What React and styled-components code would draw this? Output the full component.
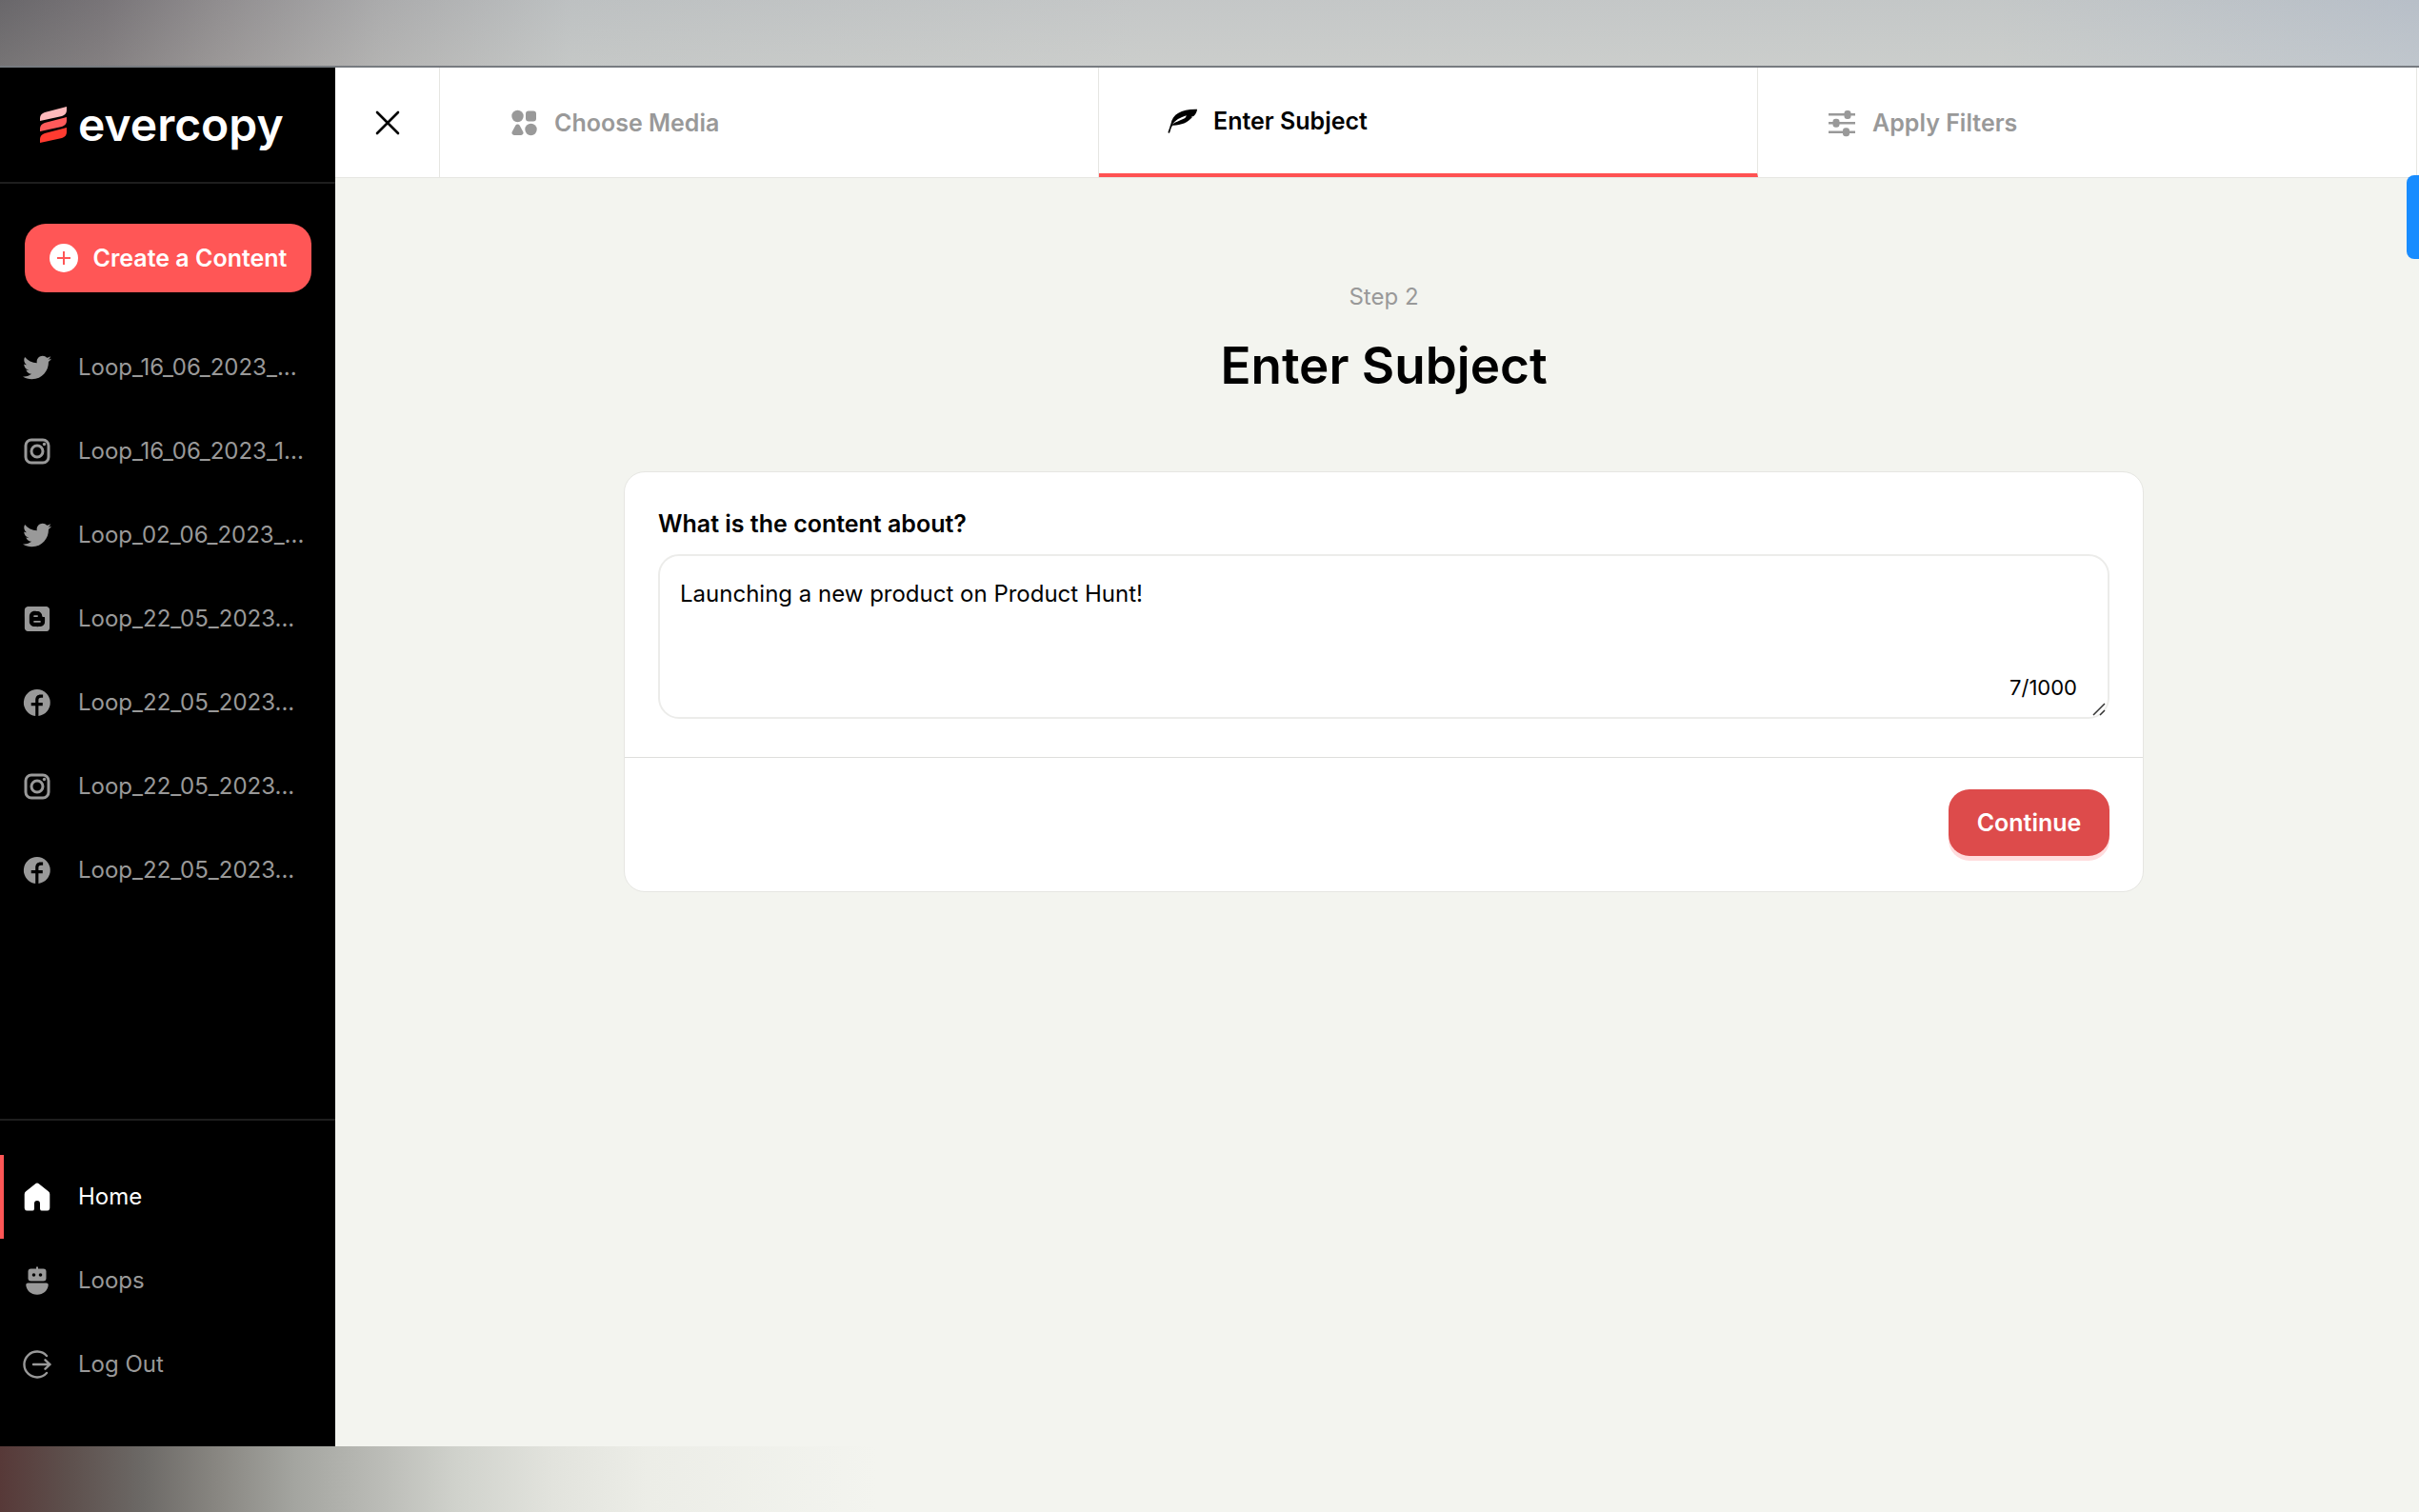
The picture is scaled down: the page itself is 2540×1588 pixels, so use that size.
import React, { useState } from "react";
import styled, { createGlobalStyle } from "styled-components";
import { FaBlogger, FaTwitter } from "react-icons/fa";

const GlobalStyle = createGlobalStyle`
  * {
    box-sizing: border-box;
  }
  body {
    margin: 0;
    background: #f3f4ef;
    color: #000;
    font-family: Inter, "Liberation Sans", sans-serif;
    font-size: 24px;
    line-height: 32px;
  }
  button,
  textarea {
    font: inherit;
  }
`;

const Page = styled.div`
  position: relative;
  display: flex;
  flex-direction: column;
  min-height: 100vh;
  overflow: hidden;
`;

const TopStrip = styled.div`
  height: 71px;
  border-bottom: 2px solid #777b80;
  background:
    linear-gradient(to bottom, rgba(190, 195, 200, 0.2), rgba(220, 222, 218, 0.25)),
    linear-gradient(
      to right,
      #545053 0,
      #676164 110px,
      #858081 230px,
      #a6a5a5 400px,
      #bdc0c0 600px,
      #c6c8c7 1200px,
      #c5c8c7 2100px,
      #b6bec8 100%
    );
`;

const BottomStrip = styled.div`
  height: 69px;
  background: linear-gradient(
    to right,
    #573938 0,
    #5d4f4c 70px,
    #6c6966 150px,
    #898782 230px,
    #a4a5a0 310px,
    #bbbcb7 400px,
    #d0d2cc 480px,
    #e2e3dd 580px,
    #ecede7 680px,
    #f3f4ef 920px
  );
`;

const Body = styled.div`
  display: flex;
  flex: 1;
`;

const Sidebar = styled.aside`
  display: flex;
  flex-direction: column;
  flex: none;
  width: 352px;
  background: #000;
`;

const Brand = styled.a`
  display: flex;
  align-items: center;
  gap: 12px;
  height: 122px;
  padding: 0 42px;
  border-bottom: 2px solid #1e1e1e;
  color: #fff;
  font-size: 48px;
  font-weight: 600;
  text-decoration: none;
`;

const CreateButton = styled.button`
  display: flex;
  align-items: center;
  justify-content: center;
  gap: 16px;
  height: 72px;
  margin: 42px 25px 35px 26px;
  padding: 0;
  border: 0;
  border-radius: 22px;
  background: #ff5656;
  color: #fff;
  font-size: 25px;
  font-weight: 600;
  white-space: nowrap;
`;

const Menu = styled.nav`
  display: flex;
  flex-direction: column;
`;

const BottomMenu = styled(Menu)`
  margin-top: auto;
  padding: 36px 0 42px;
  border-top: 2px solid #1e1e1e;
`;

const MenuLink = styled.a`
  display: flex;
  align-items: center;
  gap: 28px;
  height: 88px;
  padding-left: 20px;
  border-left: 4px solid ${(props) => (props.$active ? "#ff5656" : "transparent")};
  color: ${(props) => (props.$active ? "#fff" : "#999")};
  text-decoration: none;
  white-space: nowrap;
  svg {
    flex: none;
  }
`;

const Main = styled.main`
  flex: 1;
  min-width: 0;
`;

const Steps = styled.header`
  display: flex;
  height: 116px;
  padding-right: 2px;
  border-bottom: 1px solid #e6e6e2;
  background: #fff;
`;

const CloseButton = styled.button`
  display: flex;
  align-items: center;
  justify-content: center;
  width: 110px;
  padding: 0;
  border: 0;
  border-right: 1px solid #e6e6e2;
  background: none;
`;

const Step = styled.button`
  display: flex;
  flex: 1;
  align-items: center;
  gap: 16px;
  padding: 0 0 0 72px;
  border: 0;
  border-right: 1px solid #e6e6e2;
  border-bottom: ${(props) => (props.$active ? "4px solid #ff5252" : "0")};
  background: none;
  color: ${(props) => (props.$active ? "#000" : "#999")};
  font-size: 25px;
  font-weight: 600;
`;

const Content = styled.section`
  display: flex;
  flex-direction: column;
  align-items: center;
  padding: 109px 40px 0 54px;
`;

const StepCount = styled.p`
  margin: 0 0 24px;
  color: #999;
`;

const Title = styled.h1`
  margin: 0 0 79px;
  font-size: 53px;
  font-weight: 600;
  line-height: 64px;
`;

const Card = styled.form`
  width: 100%;
  max-width: 1596px;
  border: 1px solid #e6e6e2;
  border-radius: 22px;
  background: #fff;
`;

const Field = styled.div`
  display: flex;
  flex-direction: column;
  gap: 16px;
  padding: 38px 35px 40px;
`;

const Label = styled.label`
  font-size: 25px;
  font-weight: 600;
`;

const InputBox = styled.div`
  position: relative;
  display: flex;
`;

const SubjectInput = styled.textarea`
  width: 100%;
  height: 173px;
  padding: 24px 21px;
  border: 2px solid #ececea;
  border-radius: 22px;
  background: #fff;
  color: #000;
  outline: none;
  resize: none;
`;

const Counter = styled.span`
  position: absolute;
  right: 34px;
  bottom: 17px;
  font-size: 22px;
`;

const Grip = styled.svg`
  position: absolute;
  right: 2px;
  bottom: 2px;
`;

const Actions = styled.div`
  display: flex;
  justify-content: flex-end;
  padding: 33px 35px 37px;
  border-top: 1px solid #dededc;
`;

const ContinueButton = styled.button`
  width: 169px;
  height: 70px;
  padding: 0;
  border: 0;
  border-radius: 22px;
  background: #dd4b4b;
  box-shadow: 0 5px 0 #ffdcdd;
  color: #fff;
  font-size: 25px;
  font-weight: 600;
`;

const SideHandle = styled.button`
  position: absolute;
  top: 184px;
  right: 0;
  width: 13px;
  height: 88px;
  padding: 0;
  border: 0;
  border-radius: 8px 0 0 8px;
  background: #188cff;
`;

const LogoMark = () => (
  <svg width="28" height="38" viewBox="0 0 28 38">
    <path d="M0 15V12C0 9 2 7 5 6L28 0V4C28 7 26 9 23 10Z" fill="#ffb9bb" />
    <path d="M0 26V23C0 20 2 18 5 17L28 11V15C28 18 26 20 23 21Z" fill="#ff5a5a" />
    <path d="M0 38V34C0 31 2 29 5 28L28 22V27C28 30 26 32 23 33Z" fill="#ff3b30" />
  </svg>
);

const PlusIcon = () => (
  <svg width="30" height="30" viewBox="0 0 30 30">
    <circle cx="15" cy="15" r="15" fill="#fff" />
    <path d="M15 8v14M8 15h14" stroke="#ff5656" strokeWidth="2" />
  </svg>
);

const InstagramIcon = () => (
  <svg width="30" height="30" viewBox="0 0 30 30" fill="none" stroke="currentColor">
    <rect x="3" y="3" width="24" height="24" rx="6" strokeWidth="3" />
    <circle cx="15" cy="15" r="6" strokeWidth="3" />
    <circle cx="22.500" cy="7.500" r="1.700" fill="currentColor" stroke="none" />
  </svg>
);

const TwitterIcon = () => <FaTwitter size={30} />;

const BloggerIcon = () => <FaBlogger size={30} />;

const FacebookIcon = () => (
  <svg width="30" height="30" viewBox="0 0 30 30">
    <path
      d="M15 1a14 14 0 0 0-1.800 27.900V18.200H8.700V15h4.500v-2.600c0-4 2-6 5.600-6h2.300v3.400h-2c-2 0-2.700.8-2.700 2.600V15h4.400v3.200h-4.400v10.700A14 14 0 0 0 15 1Z"
      fill="currentColor"
    />
  </svg>
);

const HomeIcon = () => (
  <svg width="30" height="30" viewBox="0 0 30 30">
    <path
      d="M13.200 1.200a3 3 0 0 1 3.600 0l10 8a4 4 0 0 1 1.500 3.100V26.500a3 3 0 0 1-3 3H20a2 2 0 0 1-2-2V22a3 3 0 0 0-6 0v5.500a2 2 0 0 1-2 2H4.700a3 3 0 0 1-3-3V12.300a4 4 0 0 1 1.500-3.100Z"
      fill="currentColor"
    />
  </svg>
);

const RobotIcon = () => (
  <svg width="30" height="30" viewBox="0 0 30 30" fill="currentColor">
    <path d="M14 .5h2V3h-2z" />
    <rect x="5.500" y="2.500" width="19" height="13" rx="3" />
    <circle cx="11.500" cy="9" r="1.800" fill="#000" />
    <circle cx="18.500" cy="9" r="1.800" fill="#000" />
    <path d="M5.500 17.500h19a2.200 2.200 0 0 1 2.200 2.500c-.7 5.500-5.200 9.700-11.700 9.700S4 25.500 3.300 20a2.200 2.200 0 0 1 2.200-2.500Z" />
  </svg>
);

const LogOutIcon = () => (
  <svg
    width="30"
    height="30"
    viewBox="0 0 30 30"
    fill="none"
    stroke="currentColor"
    strokeWidth="2.400"
    strokeLinecap="round"
    strokeLinejoin="round"
  >
    <path d="M25 6A13.500 13.500 0 1 0 25 24" />
    <path d="M11 15h17.500M23.500 10.300l5 4.700-5 4.700" />
  </svg>
);

const CloseIcon = () => (
  <svg width="26" height="26" viewBox="0 0 26 26">
    <path d="M2 2l22 22M24 2L2 24" stroke="#000" strokeWidth="2.600" strokeLinecap="round" />
  </svg>
);

const ShapesIcon = () => (
  <svg width="32" height="32" viewBox="0 0 32 32" fill="currentColor">
    <circle cx="9.500" cy="9" r="6.200" />
    <rect x="18" y="3.500" width="11" height="11" rx="3" />
    <path d="M7.300 18.800a2.500 2.500 0 0 1 4.400 0l3.600 6.700a2.400 2.400 0 0 1-2.100 3.500H5.800a2.400 2.400 0 0 1-2.100-3.500Z" />
    <circle cx="23.500" cy="23" r="6.200" />
  </svg>
);

const FeatherIcon = () => (
  <svg width="32" height="32" viewBox="0 0 34 32">
    <path
      d="M.5 28.500C2 25 2.600 22 3.600 19.500C5.500 8 16 2.500 33 3c-.3 3-1.700 5.800-4 7.600l-2.600.8 1 .6C22.500 17.500 15 21.200 5.500 21c-1.500 2-2.200 5-3 7.500a1 1 0 0 1-2 0Z"
      fill="currentColor"
    />
    <path d="M5 20C8.500 15 14 12 21 9.800c-.3 1.700-1.200 2.700-2.600 3.600C13.500 15.800 9 17 5 20Z" fill="#fff" />
  </svg>
);

const SlidersIcon = () => (
  <svg width="32" height="32" viewBox="0 0 32 32" fill="currentColor">
    <path d="M2 6h28v2.500H2zM2 15h28v2.500H2zM2 24.500h28V27H2z" />
    <rect x="18.500" y="3" width="7" height="9" rx="3" />
    <rect x="6.500" y="11.800" width="7" height="9" rx="3" />
    <rect x="17" y="21.200" width="7" height="9" rx="3" />
  </svg>
);

const loops = [
  { id: 1, name: "Loop_16_06_2023_...", Icon: TwitterIcon },
  { id: 2, name: "Loop_16_06_2023_1...", Icon: InstagramIcon },
  { id: 3, name: "Loop_02_06_2023_...", Icon: TwitterIcon },
  { id: 4, name: "Loop_22_05_2023...", Icon: BloggerIcon },
  { id: 5, name: "Loop_22_05_2023...", Icon: FacebookIcon },
  { id: 6, name: "Loop_22_05_2023...", Icon: InstagramIcon },
  { id: 7, name: "Loop_22_05_2023...", Icon: FacebookIcon },
];

const links = [
  { name: "Home", Icon: HomeIcon, active: true },
  { name: "Loops", Icon: RobotIcon },
  { name: "Log Out", Icon: LogOutIcon },
];

const steps = [
  { name: "Choose Media", Icon: ShapesIcon },
  { name: "Enter Subject", Icon: FeatherIcon, active: true },
  { name: "Apply Filters", Icon: SlidersIcon },
];

function App() {
  const [subject, setSubject] = useState("Launching a new product on Product Hunt!");
  const words = subject.split(" ").filter(Boolean).length;

  return (
    <Page>
      <GlobalStyle />
      <TopStrip />
      <Body>
        <Sidebar>
          <Brand href="#">
            <LogoMark />
            evercopy
          </Brand>
          <CreateButton type="button">
            <PlusIcon />
            Create a Content
          </CreateButton>
          <Menu>
            {loops.map(({ id, name, Icon }) => (
              <MenuLink key={id} href="#">
                <Icon />
                {name}
              </MenuLink>
            ))}
          </Menu>
          <BottomMenu>
            {links.map(({ name, Icon, active }) => (
              <MenuLink key={name} href="#" $active={active}>
                <Icon />
                {name}
              </MenuLink>
            ))}
          </BottomMenu>
        </Sidebar>
        <Main>
          <Steps>
            <CloseButton type="button" aria-label="Close">
              <CloseIcon />
            </CloseButton>
            {steps.map(({ name, Icon, active }) => (
              <Step key={name} type="button" $active={active}>
                <Icon />
                {name}
              </Step>
            ))}
          </Steps>
          <Content>
            <StepCount>Step 2</StepCount>
            <Title>Enter Subject</Title>
            <Card onSubmit={(e) => e.preventDefault()}>
              <Field>
                <Label htmlFor="subject">What is the content about?</Label>
                <InputBox>
                  <SubjectInput
                    id="subject"
                    value={subject}
                    onChange={(e) => setSubject(e.target.value)}
                  />
                  <Counter>{words}/1000</Counter>
                  <Grip width="16" height="16" viewBox="0 0 16 16">
                    <path d="M1 14L13 2M8 14l5-5" stroke="#333" strokeWidth="1.500" />
                  </Grip>
                </InputBox>
              </Field>
              <Actions>
                <ContinueButton type="submit">Continue</ContinueButton>
              </Actions>
            </Card>
          </Content>
        </Main>
      </Body>
      <BottomStrip />
      <SideHandle type="button" aria-label="Open panel" />
    </Page>
  );
}

export default App;
